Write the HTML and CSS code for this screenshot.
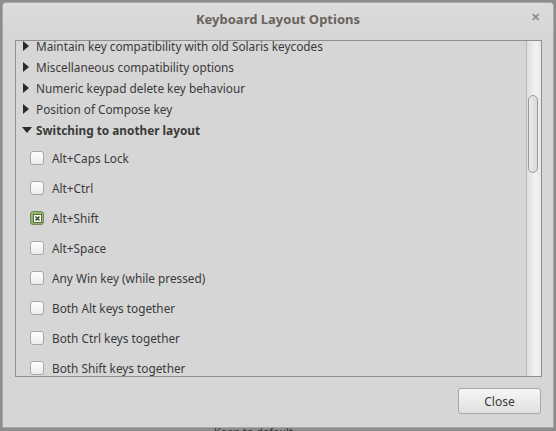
FILE: index.html
```html
<!DOCTYPE html>
<html lang="en">

<head>
  <meta charset="UTF-8">
  <title>Keyboard Layout Options</title>
  <link rel="stylesheet" href="styles.css">
</head>

<body>

  <div class="dialog">
    <div class="titlebar">
      <span class="title">Keyboard Layout Options</span>
      <span class="close-x">&#x2715;</span>
    </div>

    <div class="frame">
      <div class="tree">
        <div class="list">
          <div class="group"><span class="arrow right"></span>Maintain key compatibility with old Solaris keycodes</div>
          <div class="group"><span class="arrow right"></span>Miscellaneous compatibility options</div>
          <div class="group"><span class="arrow right"></span>Numeric keypad delete key behaviour</div>
          <div class="group"><span class="arrow right"></span>Position of Compose key</div>
          <div class="group open"><span class="arrow down"></span>Switching to another layout</div>

          <div class="option"><span class="check"></span>Alt+Caps Lock</div>
          <div class="option"><span class="check"></span>Alt+Ctrl</div>
          <div class="option"><span class="check checked">
            <svg width="9" height="9" viewBox="0 0 9 9">
              <rect x="0.5" y="0.5" width="8" height="8" fill="#fff" stroke="#55703c"/>
              <path d="M2.5 2.5 L6.5 6.5 M6.5 2.5 L2.5 6.5" stroke="#3d4a33" stroke-width="1.6"/>
            </svg>
          </span>Alt+Shift</div>
          <div class="option"><span class="check"></span>Alt+Space</div>
          <div class="option"><span class="check"></span>Any Win key (while pressed)</div>
          <div class="option"><span class="check"></span>Both Alt keys together</div>
          <div class="option"><span class="check"></span>Both Ctrl keys together</div>
          <div class="option"><span class="check"></span>Both Shift keys together</div>
        </div>
      </div>
      <div class="scrollbar">
        <div class="thumb"></div>
      </div>
    </div>

    <div class="actions">
      <button type="button">Close</button>
    </div>
  </div>

  <div class="behind">Keep to default</div>

</body>

</html>
```

FILE: styles.css
```css
body {
  margin: 0;
  width: 556px;
  height: 431px;
  overflow: hidden;
  background: #8c8c8c;
  font-family: "Noto Sans", "Open Sans", sans-serif;
  font-size: 11.8px;
  color: #3a3a3a;
  position: relative;
}

.dialog {
  margin: 2px 2px 0 2px;
  height: 424px;
  background: #d6d6d6;
  border: 1px solid #a9a9a9;
  border-radius: 4px 4px 0 0;
  display: flex;
  flex-direction: column;
}

.titlebar {
  height: 34px;
  display: flex;
  align-items: center;
  justify-content: center;
  position: relative;
  background: linear-gradient(#dcdcdc, #d6d6d6);
  border-radius: 4px 4px 0 0;
}

.title {
  font-weight: bold;
  font-size: 13px;
  color: #6a625c;
  margin-top: -3px;
}

.close-x {
  position: absolute;
  right: 13px;
  top: 6px;
  font-size: 11px;
  font-weight: bold;
  color: #8a8a8a;
}

/* tree view with scrollbar */
.frame {
  margin: 3px 11px 0 12px;
  height: 335px;
  border: 1px solid #8f8f8f;
  display: flex;
  overflow: hidden;
}

.tree {
  flex: 1;
  overflow: hidden;
}

.list {
  margin-top: -6px;
}

.group {
  height: 21px;
  display: flex;
  align-items: center;
  padding-left: 6px;
}

.group.open {
  font-weight: bold;
  margin-bottom: 3px;
}

.arrow {
  width: 0;
  height: 0;
  margin-right: 8px;
}

.arrow.right {
  border-top: 5px solid transparent;
  border-bottom: 5px solid transparent;
  border-left: 6px solid #2a2a2a;
  margin-left: 1px;
  margin-right: 7px;
}

.arrow.down {
  border-left: 5px solid transparent;
  border-right: 5px solid transparent;
  border-top: 6px solid #2a2a2a;
  margin-right: 4px;
}

.option {
  height: 30px;
  display: flex;
  align-items: center;
  padding-left: 14px;
}

.check {
  width: 12px;
  height: 12px;
  border: 1px solid #a8a8a8;
  border-radius: 3px;
  background: linear-gradient(#ffffff, #ececec);
  margin-right: 8px;
  display: flex;
  align-items: center;
  justify-content: center;
}

.check.checked {
  border-color: #6f8a56;
  background: #93b673;
}

.scrollbar {
  width: 14px;
  border-left: 1px solid #b9b9b9;
  background: linear-gradient(to right, #dedede, #f2f2f2 60%, #e8e8e8);
  position: relative;
}

.thumb {
  position: absolute;
  left: 1px;
  top: 54px;
  width: 8px;
  height: 76px;
  border: 1px solid #9a9a9a;
  border-radius: 5px;
  background: linear-gradient(to right, #eaeaea, #d9d9d9);
}

.actions {
  display: flex;
  justify-content: flex-end;
  padding: 11px 12px 0 0;
}

button {
  width: 83px;
  height: 26px;
  font-family: inherit;
  font-size: 12px;
  color: #3a3a3a;
  background: linear-gradient(#f6f6f6, #e0e0e0);
  border: 1px solid #a6a6a6;
  border-radius: 3px;
}

.behind {
  position: absolute;
  left: 214px;
  top: 424px;
  color: #333;
  font-size: 11px;
}
```
